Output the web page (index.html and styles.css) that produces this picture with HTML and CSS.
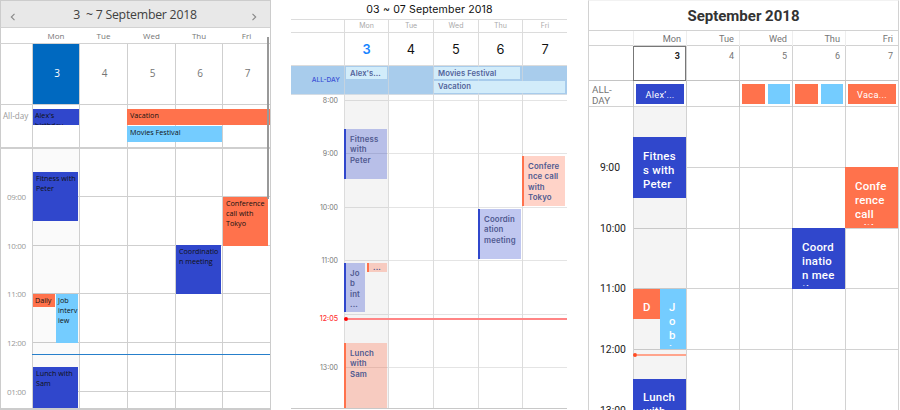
FILE: index.html
```html
<!DOCTYPE html>
<html lang="en">
<head>
<meta charset="utf-8">
<title>Work week calendars</title>
<link rel="stylesheet" href="styles.css">
</head>
<body>
<main class="board">

  <section class="cal win">
    <header class="title">
      <svg class="chev" viewBox="0 0 6 8"><path d="M4.5 .8 1.3 4l3.2 3.2"/></svg>
      <h1>3 &nbsp;~ 7 September 2018</h1>
      <svg class="chev" viewBox="0 0 6 8"><path d="M1.5 .8 4.7 4 1.5 7.2"/></svg>
    </header>
    <div class="row names"><span></span><span>Mon</span><span>Tue</span><span>Wed</span><span>Thu</span><span>Fri</span></div>
    <div class="row dates"><span></span><span class="today">3</span><span>4</span><span>5</span><span>6</span><span>7</span></div>
    <div class="row allday">
      <span class="label">All-day</span><span></span><span></span><span></span><span></span><span></span>
      <div class="bar blue alex">Alex's<br>birthday</div>
      <div class="bar orange vacation">Vacation</div>
      <div class="bar sky movies">Movies Festival</div>
    </div>
    <div class="body">
      <div class="hours">
        <div class="hour"><time>09:00</time><i></i></div>
        <div class="hour"><time>10:00</time><i></i></div>
        <div class="hour"><time>11:00</time><i></i></div>
        <div class="hour"><time>12:00</time><i></i></div>
        <div class="hour"><time>01:00</time><i></i></div>
      </div>
      <div class="row days">
        <div></div>
        <div class="day current">
          <div class="event blue fitness">Fitness with<br>Peter</div>
          <div class="pair"><div class="event orange daily">Daily</div><div class="event sky job">Job<br>interv<br>iew</div></div>
          <div class="event blue lunch">Lunch with<br>Sam</div>
        </div>
        <div class="day"></div>
        <div class="day"></div>
        <div class="day"><div class="event blue coord">Coordinatio<br>n meeting</div></div>
        <div class="day"><div class="event orange conf">Conference<br>call with<br>Tokyo</div></div>
      </div>
      <div class="now"></div>
    </div>
    <div class="scroll"></div>
  </section>

  <section class="cal ios">
    <header class="title"><h1>03 ~ 07 September 2018</h1></header>
    <div class="row names"><span></span><span>Mon</span><span>Tue</span><span>Wed</span><span>Thu</span><span>Fri</span></div>
    <div class="row dates"><span></span><span class="today">3</span><span>4</span><span>5</span><span>6</span><span>7</span></div>
    <div class="row allday">
      <span class="label">ALL-DAY</span><span></span><span></span><span></span><span></span><span></span>
      <div class="bar alex">Alex's...</div>
      <div class="bar movies">Movies Festival</div>
      <div class="bar vacation">Vacation</div>
    </div>
    <div class="body">
      <div class="hours">
        <div class="hour"><time>8:00</time><i></i></div>
        <div class="hour"><time>9:00</time><i></i></div>
        <div class="hour"><time>10:00</time><i></i></div>
        <div class="hour"><time>11:00</time><i></i></div>
        <div class="hour"><time></time><i></i></div>
        <div class="hour"><time>13:00</time><i></i></div>
      </div>
      <div class="row days">
        <div></div>
        <div class="day current">
          <div class="event indigo fitness">Fitness<br>with<br>Peter</div>
          <div class="pair"><div class="event indigo job">Jo<br>b<br>int<br>...</div><div class="event coral daily">...</div></div>
          <div class="event coral lunch">Lunch<br>with<br>Sam</div>
        </div>
        <div class="day"></div>
        <div class="day"></div>
        <div class="day"><div class="event indigo coord">Coordin<br>ation<br>meeting</div></div>
        <div class="day"><div class="event coral conf">Confere<br>nce call<br>with<br>Tokyo</div></div>
      </div>
      <div class="now"><time>12:05</time><b></b><i></i></div>
    </div>
  </section>

  <section class="cal droid">
    <header class="title"><h1>September 2018</h1></header>
    <div class="row names"><span></span><span>Mon</span><span>Tue</span><span>Wed</span><span>Thu</span><span>Fri</span></div>
    <div class="row dates"><span></span><span class="today">3</span><span>4</span><span>5</span><span>6</span><span>7</span></div>
    <div class="row allday">
      <span class="label">ALL-<br>DAY</span>
      <div class="slot"><div class="bar blue">Alex’...</div></div>
      <div class="slot"></div>
      <div class="slot"><div class="bar orange"></div><div class="bar sky"></div></div>
      <div class="slot"><div class="bar orange"></div><div class="bar sky"></div></div>
      <div class="slot"><div class="bar orange">Vaca...</div></div>
    </div>
    <div class="body">
      <div class="hours">
        <div class="hour"><time>9:00</time><i></i></div>
        <div class="hour"><time>10:00</time><i></i></div>
        <div class="hour"><time>11:00</time><i></i></div>
        <div class="hour"><time>12:00</time><i></i></div>
        <div class="hour"><time>13:00</time><i></i></div>
      </div>
      <div class="row days">
        <div></div>
        <div class="day current">
          <div class="event blue fitness"><p>Fitnes<br>s with<br>Peter</p></div>
          <div class="pair"><div class="event orange daily"><p>D</p></div><div class="event sky job"><p>J<br>o<br>b<br>i</p></div></div>
          <div class="event blue lunch"><p>Lunch<br>with</p></div>
        </div>
        <div class="day"></div>
        <div class="day"></div>
        <div class="day"><div class="event blue coord"><p>Coord<br>inatio<br>n mee<br>ting</p></div></div>
        <div class="day"><div class="event orange conf"><p>Confe<br>rence<br>call<br>with</p></div></div>
      </div>
      <div class="now"><b></b><i></i></div>
    </div>
  </section>

</main>
</body>
</html>
```
FILE: styles.css
```css
* { box-sizing: border-box; }
body { margin: 0; background: #fff; overflow: hidden; }
h1, p { margin: 0; font-weight: 400; }
p { font-weight: inherit; }

.board { display: flex; width: 900px; height: 410px; }
.cal { display: flex; flex-direction: column; flex: none; position: relative; overflow: hidden; white-space: nowrap; }
.row { display: grid; grid-template-columns: var(--gutter) var(--cols); }
.title, .names, .dates, .allday { flex: none; }
.title { display: flex; align-items: center; justify-content: center; }

.body { display: grid; grid-template: 100% / 100%; flex: 1; min-height: 0; position: relative; overflow: hidden; }
.hours, .days { grid-area: 1 / 1; min-height: 0; }
.hour { display: flex; align-items: flex-start; flex: none; height: var(--pitch); }
.hour time { flex: none; width: var(--gutter); height: 12px; margin-top: -5px; line-height: 12px; }
.hour i { flex: 1; height: 1px; background: var(--line); }
.day { display: flex; flex-direction: column; border-left: 1px solid var(--line); min-height: 0; }
.event { flex: none; overflow: hidden; }
.pair { display: flex; align-items: flex-start; flex: none; }
.now { position: absolute; }

.blue { background: #3047cc; }
.orange { background: #ff724c; }
.sky { background: #74ccff; }

/* Windows */
.win {
  --gutter: 32px; --cols: 47px 48px 48px 47px 1fr; --pitch: 48.7px; --line: #cfcfcf;
  width: 271px; height: 410px; border: 1px solid #ccc; border-width: 1px 1px 2px 0;
  box-shadow: inset 1px 0 #ccc; font-family: "Open Sans", sans-serif; color: #757575;
}
.win .title { height: 27px; background: #e8e8e8; border-bottom: 1px solid #d2d2d2; border-left: 1px solid #ccc; justify-content: space-between; padding: 0 13px 0 9px; }
.win h1 { font-size: 12.3px; letter-spacing: -.23px; padding-left: 3px; color: #404040; }
.chev { width: 6px; height: 8px; margin-top: 5px; fill: none; stroke: #888; stroke-width: 1.1; }
.win .names { height: 16px; border-bottom: 1px solid #d2d2d2; font-size: 8px; line-height: 15px; text-align: center; }
.win .names span { padding-left: 1px; }
.win .dates { height: 61px; border-bottom: 1px solid var(--line); font-size: 10px; line-height: 59px; text-align: center; }
.win .dates span + span { border-left: 1px solid var(--line); padding-left: 2px; }
.win .dates .today { background: #0069c0; color: #fff; }
.win .allday { height: 44px; grid-template-rows: 4px 17px 17px 1fr; border-bottom: 2px solid var(--line); }
.win .allday > span { grid-row: 1 / -1; }
.win .allday > span + span { border-left: 1px solid var(--line); }
.allday > span:nth-child(1) { grid-column: 1; }
.allday > span:nth-child(2) { grid-column: 2; }
.allday > span:nth-child(3) { grid-column: 3; }
.allday > span:nth-child(4) { grid-column: 4; }
.allday > span:nth-child(5) { grid-column: 5; }
.allday > span:nth-child(6) { grid-column: 6; }
.win .label { padding: 5px 0 0 3px; font-size: 8.1px; line-height: 11px; color: #999; }
.win .bar { height: 16px; margin-left: 1px; padding: 1px 2px; overflow: hidden; font-size: 7.2px; line-height: 10px; color: #111; }
.win .alex { grid-area: 2 / 2; }
.win .vacation { grid-area: 2 / 4 / 3 / 7; padding-left: 3px; margin-left: 0; }
.win .movies { grid-area: 3 / 4 / 4 / 6; padding-left: 3px; margin-left: 0; }
.win .hours { padding-top: 47px; }
.win time { font-size: 8px; padding-left: 7px; letter-spacing: -.35px; color: #999; }
.win .current { background: rgba(0, 0, 0, .02); }
.win .event { width: 45px; padding: 1px 3px; font-size: 7.2px; line-height: 10px; color: #111; }
.win .fitness { height: 49px; margin-top: 23px; }
.win .pair { height: 49px; margin-top: 73px; gap: 1px; width: 45px; }
.win .pair .event { width: 22px; padding: 1px 2px; }
.win .daily { height: 13px; }
.win .job { height: 49px; }
.win .lunch { height: 45px; margin-top: 24px; }
.win .coord { height: 49px; margin-top: 96px; }
.win .conf { height: 49px; margin-top: 48px; }
.win .now { left: 32px; right: 0; top: 205px; height: 1px; background: #267fcb; }
.scroll { position: absolute; left: 267px; top: 36px; width: 2px; height: 162px; background: #999; }

/* iOS */
.ios {
  --gutter: 53px; --cols: 44px 45px 45px 44px 1fr; --pitch: 53.4px; --line: #dcdcdc;
  width: 276px; height: 409px; margin-left: 20px; border-bottom: 1px solid #c8c8c8; font-family: Inter, sans-serif;
}
.ios .title { height: 19px; }
.ios h1 { font-size: 10.6px; letter-spacing: .13px; padding-left: 1px; color: #111; }
.ios .names { height: 14px; border: 1px solid #dcdcdc; border-width: 1px 0; font-size: 7px; line-height: 12px; color: #aaa; text-align: center; }
.ios .names span + span, .ios .dates span + span { border-left: 1px solid var(--line); }
.ios .dates { height: 33px; border-bottom: 1px solid #dcdcdc; font-size: 12.8px; line-height: 33px; text-align: center; color: #111; }
.ios .dates .today { color: #1583ff; font-weight: 600; }
.ios .allday { height: 29px; grid-template-rows: 14px 1fr; background: #a8ccec; border-bottom: 1px solid #d4dce4; }
.ios .allday > span { grid-row: 1 / -1; }
.ios .allday > span + span { border-left: 1px solid #c5d3e0; }
.ios .label { padding-right: 4px; font-size: 6.7px; font-weight: 500; line-height: 29px; text-align: right; color: #3a50d5; }
.ios .bar { margin: 1px 1px 1px 2px; padding-left: 4px; background: #d2ecfa; font-size: 7.7px; font-weight: 600; line-height: 13px; letter-spacing: .05px; color: #54649a; }
.ios .alex { grid-area: 1 / 2; }
.ios .movies { grid-area: 1 / 4 / 2 / 6; margin-left: 1px; margin-right: 2px; }
.ios .vacation { grid-area: 2 / 4 / 3 / 7; margin-left: 1px; margin-right: 2px; line-height: 12px; }
.ios .hours { padding-top: 5px; }
.ios time { padding-right: 6px; font-size: 7px; text-align: right; color: #777; }
.ios .hour i { background: #e4e4e4; }
.ios .current { background: rgba(0, 0, 0, .045); }
.ios .event { width: 43px; margin-left: -1px; padding: 5px 0 0 4px; border-left: 2px solid; font-size: 7.8px; font-weight: 600; line-height: 10.4px; letter-spacing: .15px; color: #505a90; }
.ios .indigo { background: rgba(48, 71, 204, .3); border-color: #3047cc; }
.ios .coral { background: rgba(255, 114, 76, .31); border-color: #ff724c; }
.ios .fitness { height: 50px; margin-top: 34px; }
.ios .pair { margin-top: 84px; width: 43px; gap: 2px; }
.ios .pair .job { width: 21px; height: 49px; }
.ios .pair .daily { width: 20px; height: 9px; padding-top: 0; line-height: 9px; margin-left: 0; }
.ios .lunch { height: 66px; margin-top: 31px; }
.ios .coord { height: 50px; margin-top: 114px; }
.ios .conf { height: 50px; margin-top: 61px; }
.ios .now { left: 0; right: 0; top: 218px; display: flex; align-items: center; height: 12px; }
.ios .now time { width: 53px; line-height: 12px; font-weight: 500; color: #f33; }
.ios .now b { width: 4px; height: 4px; border-radius: 50%; background: #f00; }
.ios .now i { flex: 1; height: 2px; background: #ff8585; }

/* Android */
.droid {
  --gutter: 44px; --cols: 53px 53px 53px 53px 1fr; --pitch: 60.7px; --line: #d2d2d2;
  width: 311px; height: 410px; margin-left: 21px; border-left: 1px solid #d2d2d2; border-right: 1px solid #d2d2d2;
  border-top: 1px solid #f2f2f2; font-family: Roboto, sans-serif; color: #757575;
}
.droid .title { height: 29px; }
.droid h1 { font-size: 15px; font-weight: 700; color: #333; }
.droid .names { height: 16px; border: 1px solid #d2d2d2; border-width: 1px 0; font-size: 9.2px; line-height: 15px; text-align: right; }
.droid .names span { padding-right: 5px; }
.droid .names span + span { border-left: 1px solid #eee; }
.droid .dates { height: 35px; border-bottom: 1px solid #c4c4c4; font-size: 9px; line-height: 20px; text-align: right; }
.droid .dates span { padding-right: 5px; }
.droid .dates span + span { border-left: 1px solid var(--line); }
.droid .dates .today { border: 1px solid #777; line-height: 18px; margin-bottom: -1px; font-weight: 700; color: #222; }
.droid .allday { height: 26px; border-bottom: 1px solid #d2d2d2; }
.droid .label { padding: 3px 0 0 3px; font-size: 9.8px; line-height: 11px; }
.droid .slot { display: flex; gap: 3px; padding: 3px 2px; border-left: 1px solid #c4c4c4; }
.droid .slot .bar { flex: 1; height: 20px; overflow: hidden; font-size: 9.2px; line-height: 21px; text-align: center; letter-spacing: .3px; color: #fff; }
.droid .hours { padding-top: 60px; }
.droid time { padding-left: 11px; font-size: 10.4px; color: #222; }
.droid .current { background: rgba(0, 0, 0, .045); }
.droid .event { width: 53px; padding: 12px 0 3px 10px; font-size: 11.4px; font-weight: 500; line-height: 14.1px; letter-spacing: .25px; color: #fff; }
.droid .day > * { margin-left: -1px; }
.droid .event p { height: 100%; overflow: hidden; }
.droid .fitness { height: 61px; margin-top: 30px; }
.droid .pair { margin-top: 91px; width: 53px; }
.droid .daily { width: 27px; height: 30px; padding-top: 11px; }
.droid .job { width: 26px; height: 60px; padding-left: 9px; padding-top: 11px; }
.droid .lunch { height: 61px; margin-top: 30px; padding-bottom: 0; padding-top: 11px; }
.droid .coord { height: 61px; margin-top: 121px; }
.droid .conf { height: 61px; margin-top: 60px; }
.droid .now { left: 44px; top: 246px; display: flex; align-items: center; width: 53px; height: 4px; }
.droid .now b { width: 4px; height: 4px; border-radius: 50%; background: #ff4c24; }
.droid .now i { flex: 1; height: 2px; background: #ffa48c; }
```
